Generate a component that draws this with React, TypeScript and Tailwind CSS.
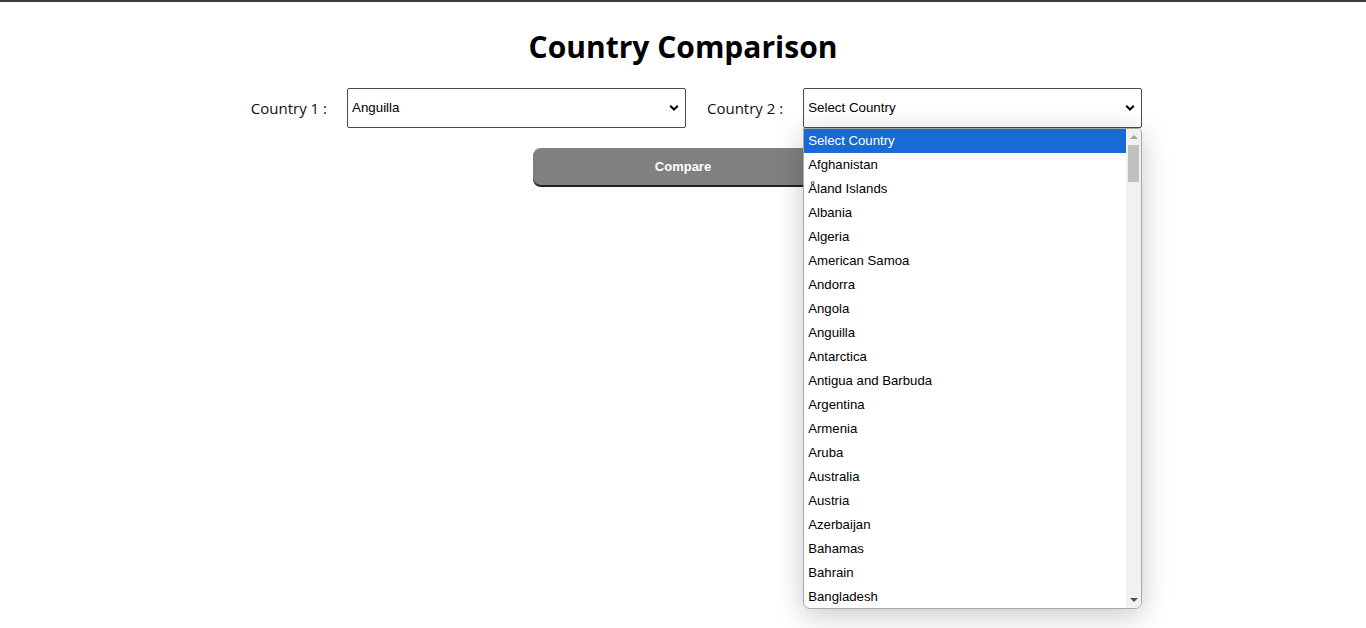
import { useState } from "react";

const countries = [
    "Select Country", "Afghanistan", "Åland Islands", "Albania", "Algeria", "American Samoa",
    "Andorra", "Angola", "Anguilla", "Antarctica", "Antigua and Barbuda", "Argentina",
    "Armenia", "Aruba", "Australia", "Austria", "Azerbaijan", "Bahamas", "Bahrain", "Bangladesh",
];

const Chevron = () => (
    <svg width="10" height="7" viewBox="0 0 10 7" className="absolute right-[6px] top-1/2 -translate-y-1/2 pointer-events-none">
        <path d="M1.2 1.2 L5 5 L8.8 1.2" fill="none" stroke="#000" strokeWidth="2" />
    </svg>
);

const CountrySelect = ({ value }: { value: string }) => (
    <div className="relative w-[339px] h-[40px] border border-[#4a4a4a] rounded-[2px] bg-white flex items-center pl-[4px] font-['Liberation_Sans',Arial,sans-serif] text-[13.33px] text-black">
        {value}
        <Chevron />
    </div>
);

const App = () => {
    const [hovered] = useState(0);
    return (
        <div className="min-h-screen bg-white border-t-2 border-[#3a3a3a] font-['Open_Sans',sans-serif]">
            <h1 className="text-center text-[30px] font-bold text-black pt-[23px] leading-[44px]">Country Comparison</h1>

            <div className="flex justify-center pl-[27px] mt-[19px] items-center">
                <label className="text-[15px] text-[#111] mr-[20px]">Country 1 :</label>
                <CountrySelect value="Anguilla" />
                <label className="text-[15px] text-[#111] ml-[21px] mr-[20px]">Country 2 :</label>
                <div className="relative">
                    <CountrySelect value="Select Country" />
                    {/* open dropdown list */}
                    <div className="absolute left-0 top-full w-[339px] h-[481px] bg-white border border-[#a8a8a8] rounded-b-[7px] rounded-tr-[4px] shadow-[0_6px_28px_rgba(0,0,0,0.22)] overflow-hidden flex z-10">
                        <ul className="flex-1 font-['Liberation_Sans',Arial,sans-serif] text-[13.2px] text-black">
                            {countries.map((c, idx) => (
                                <li key={idx} className={`h-[24px] flex items-center pl-[4px] ${idx === hovered ? "bg-[#1a6ad6] text-white" : ""}`}>{c}</li>
                            ))}
                        </ul>
                        <div className="w-[15px] bg-[#f1f1f1] flex flex-col items-center">
                            <div className="h-[16px] flex items-center justify-center">
                                <div className="w-0 h-0 border-l-[4px] border-r-[4px] border-b-[4px] border-l-transparent border-r-transparent border-b-[#a3a3a3]" />
                            </div>
                            <div className="w-[11px] h-[37px] bg-[#c1c1c1]" />
                            <div className="flex-1" />
                            <div className="h-[16px] flex items-center justify-center">
                                <div className="w-0 h-0 border-l-[4px] border-r-[4px] border-t-[4px] border-l-transparent border-r-transparent border-t-[#505050]" />
                            </div>
                        </div>
                    </div>
                </div>
            </div>

            <div className="flex justify-center mt-[20px]">
                <button className="w-[300px] h-[37px] bg-[#808080] rounded-[8px] shadow-[0_2px_0_#222] text-white text-[13px] font-bold font-['Liberation_Sans',Arial,sans-serif]">Compare</button>
            </div>
        </div>
    );
};

export default App;
